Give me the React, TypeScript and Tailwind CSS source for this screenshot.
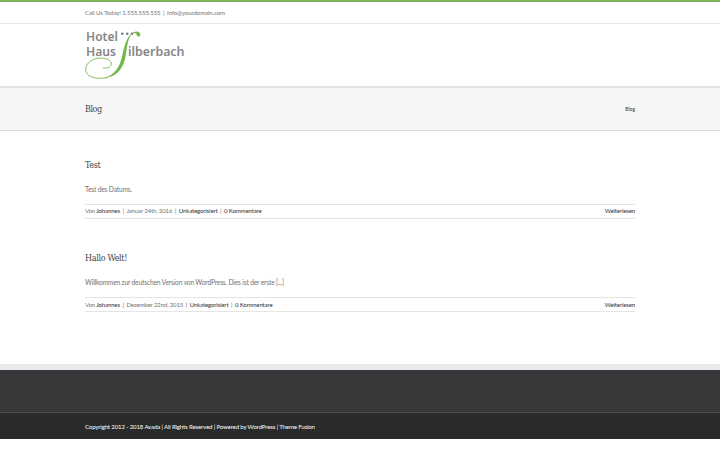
import React from 'react';

interface Post {
  title: string;
  excerpt: string;
  date: string;
}

const posts: Post[] = [
  {
    title: 'Test',
    excerpt: 'Test des Datums.',
    date: 'Januar 24th, 2016',
  },
  {
    title: 'Hallo Welt!',
    excerpt: 'Willkommen zur deutschen Version von WordPress. Dies ist der erste [...]',
    date: 'Dezember 22nd, 2015',
  },
];

function Logo() {
  return (
    <svg width="100" height="50" viewBox="0 0 100 50" className="block overflow-visible" aria-label="Hotel Haus Silberbach">
      <g fill="#858688" fontFamily="'Noto Sans', sans-serif" fontSize="12.8" fontWeight="600">
        <text x="1" y="10.7" textLength="32" lengthAdjust="spacingAndGlyphs">Hotel</text>
        <text x="1" y="25.5" textLength="30" lengthAdjust="spacingAndGlyphs">Haus</text>
        <text x="43" y="25.5" textLength="56.5" lengthAdjust="spacingAndGlyphs">ilberbach</text>
      </g>
      <g fill="#777b80">
        <circle cx="37.3" cy="3.7" r="1.3" />
        <circle cx="42.2" cy="3.7" r="1.3" />
        <circle cx="47" cy="3.7" r="1.3" />
      </g>
      <path
        d="M22 47.8C9 49.8 .8 45.9 .6 39.8C.5 33 8 27.8 16 28C22 28.2 27 30.7 26.3 34.2C25.7 37.3 21.5 39 18.3 37.8"
        fill="none"
        stroke="#74b74b"
        strokeWidth=".9"
        strokeLinecap="round"
      />
      <path d="M48 2.7C41 7 39.6 16 37.4 25C35 36 31 44.5 19 47.9C33 47.2 38.6 37 40.6 26C42.2 17 42.5 7.5 48 2.7Z" fill="#74b74b" />
      <path d="M46.5 3.6C50 .2 56 .8 55.2 5.3C54.8 7.2 51.8 6.9 51.7 5C51.8 3.3 50 2.3 46.5 3.6Z" fill="#74b74b" />
    </svg>
  );
}

function Separator() {
  return <span className="mx-[2.6px]">|</span>;
}

function PostItem({ post }: { post: Post }) {
  return (
    <article className="h-[93.3px]">
      <h2 className="h-[24px] font-['DejaVu_Serif_Condensed','DejaVu_Serif',serif] text-[9px] leading-[12px] tracking-[-0.35px] text-[#444]">
        {post.title}
      </h2>
      <p className="h-[20.5px] text-[6.7px] leading-[12px] tracking-[-0.19px] text-[#747474]">{post.excerpt}</p>
      <div className="flex h-[15px] items-center justify-between border-y border-[#e4e4e4] text-[6.1px] tracking-[-0.17px] text-[#747474]">
        <div className="whitespace-nowrap">
          Von <a className="text-[#333]">Johannes</a>
          <Separator />
          {post.date}
          <Separator />
          <a className="text-[#333]">Unkategorisiert</a>
          <Separator />
          <a className="text-[#333]">0 Kommentare</a>
        </div>
        <a className="text-[#333]">Weiterlesen</a>
      </div>
    </article>
  );
}

export default function App() {
  return (
    <div className="h-[450px] overflow-hidden bg-white font-[Lato,sans-serif]">
      <header className="h-[86px] border-t-2 border-[#7db35b]">
        <div className="h-[22px] border-b border-[#e8e8e8]">
          <div className="mx-auto w-[550px] text-[6.1px] leading-[21px] tracking-[-0.11px] text-[#747474]">
            Call Us Today! 1.555.555.555
            <Separator />
            info@yourdomain.com
          </div>
        </div>
        <div className="mx-auto w-[550px] pt-[6px]">
          <Logo />
        </div>
      </header>

      <section className="h-[45px] border-t-2 border-b border-t-[#e4e4e4] border-b-[#d9d9d9] bg-[#f6f6f6]">
        <div className="mx-auto flex h-full w-[550px] items-center justify-between pt-[2px]">
          <h1 className="font-['DejaVu_Serif_Condensed','DejaVu_Serif',serif] text-[9px] tracking-[-0.5px] text-[#444]">Blog</h1>
          <span className="text-[5px] text-[#333]">Blog</span>
        </div>
      </section>

      <main className="mx-auto h-[233px] w-[550px] pt-[28px]">
        {posts.map((post) => (
          <PostItem key={post.title} post={post} />
        ))}
      </main>

      <footer>
        <div className="h-[48px] border-t-[6px] border-[#e9eaee] bg-[#363839]" />
        <div className="h-[27px] border-t border-[#4b4c4d] bg-[#282a2b]">
          <div className="mx-auto w-[550px] text-[6.1px] leading-[27px] tracking-[-0.16px] text-white">
            Copyright 2012 - 2018 Avada | All Rights Reserved | Powered by WordPress | Theme Fusion
          </div>
        </div>
      </footer>
    </div>
  );
}
